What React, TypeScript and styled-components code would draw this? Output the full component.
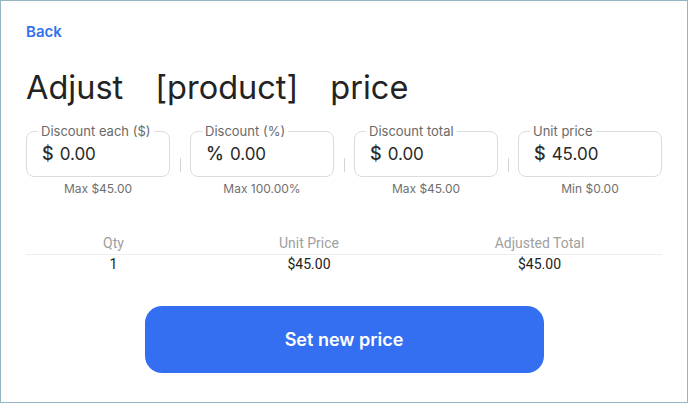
import React from 'react';
import styled, { createGlobalStyle } from 'styled-components';

const GlobalStyle = createGlobalStyle`
  html, body {
    margin: 0;
    padding: 0;
    background: #ffffff;
  }
  * {
    box-sizing: border-box;
  }
`;

const Frame = styled.div`
  width: 688px;
  height: 403px;
  border: 1px solid #93b5c4;
  background: #ffffff;
  padding: 21px 25px 0 25px;
  font-family: Inter, "Noto Sans", sans-serif;
  color: #222222;
  display: flex;
  flex-direction: column;
`;

const BackLink = styled.a`
  font-size: 15px;
  font-weight: 600;
  line-height: 20px;
  color: #3471ef;
  cursor: pointer;
  align-self: flex-start;
`;

const Title = styled.h1`
  margin: 26px 0 0 0;
  font-size: 32.5px;
  font-weight: 400;
  line-height: 40px;
  display: flex;
  gap: 32px;
  color: #232323;
`;

const FieldsRow = styled.div`
  margin-top: 16px;
  display: flex;
  align-items: flex-start;
`;

const FieldColumn = styled.div`
  width: 144px;
  display: flex;
  flex-direction: column;
  align-items: center;
`;

const Separator = styled.div`
  width: 20px;
  height: 48px;
  display: flex;
  align-items: flex-end;
  justify-content: center;

  &::after {
    content: '';
    width: 1px;
    height: 14px;
    background: #d4d4d4;
  }
`;

const Box = styled.fieldset`
  width: 144px;
  margin: 0;
  padding: 5px 10px 11px 15px;
  border: 1px solid #dcdcdc;
  border-radius: 8px;
  min-inline-size: 0;
`;

const Legend = styled.legend`
  margin-left: -4px;
  padding: 0 3px;
  font-size: 13px;
  line-height: 14px;
  color: #6a6a6a;
`;

const Value = styled.div`
  font-size: 17px;
  line-height: 22px;
  color: #2a2a2a;
  display: flex;
  gap: 6px;
`;

const Unit = styled.span`
  font-weight: 500;
  font-size: 18px;
`;

const Helper = styled.div`
  margin-top: 4px;
  font-size: 12px;
  line-height: 16px;
  color: #6f6f6f;
`;

const Table = styled.div`
  margin-top: 37px;
  display: grid;
  grid-template-columns: 175px 216px 1fr;
  font-family: Roboto, "Liberation Sans", sans-serif;
  font-size: 14px;
`;

const HeadCell = styled.div`
  text-align: center;
  color: #a0a0a0;
  line-height: 18px;
  padding-bottom: 2px;
  border-bottom: 1px solid #eeeeee;
`;

const Cell = styled.div`
  text-align: center;
  color: #222222;
  line-height: 19px;
`;

const ButtonRow = styled.div`
  margin-top: 32px;
  display: flex;
  justify-content: center;
`;

const PrimaryButton = styled.button`
  width: 399px;
  height: 67px;
  border: none;
  border-radius: 17px;
  background: #346ff2;
  color: #ffffff;
  font-family: Inter, "Noto Sans", sans-serif;
  font-size: 18px;
  font-weight: 600;
  cursor: pointer;
`;

const fields = [
  { label: 'Discount each ($)', unit: '$', value: '0.00', helper: 'Max $45.00' },
  { label: 'Discount (%)', unit: '%', value: '0.00', helper: 'Max 100.00%' },
  { label: 'Discount total', unit: '$', value: '0.00', helper: 'Max $45.00' },
  { label: 'Unit price', unit: '$', value: '45.00', helper: 'Min $0.00' },
];

export default function App() {
  return (
    <>
      <GlobalStyle />
      <Frame>
        <BackLink>Back</BackLink>
        <Title>
          <span>Adjust</span>
          <span>[product]</span>
          <span>price</span>
        </Title>
        <FieldsRow>
          {fields.map((f, i) => (
            <React.Fragment key={f.label}>
              {i > 0 && <Separator />}
              <FieldColumn>
                <Box>
                  <Legend>{f.label}</Legend>
                  <Value>
                    <Unit>{f.unit}</Unit>
                    <span>{f.value}</span>
                  </Value>
                </Box>
                <Helper>{f.helper}</Helper>
              </FieldColumn>
            </React.Fragment>
          ))}
        </FieldsRow>
        <Table>
          <HeadCell>Qty</HeadCell>
          <HeadCell>Unit Price</HeadCell>
          <HeadCell>Adjusted Total</HeadCell>
          <Cell>1</Cell>
          <Cell>$45.00</Cell>
          <Cell>$45.00</Cell>
        </Table>
        <ButtonRow>
          <PrimaryButton>Set new price</PrimaryButton>
        </ButtonRow>
      </Frame>
    </>
  );
}
